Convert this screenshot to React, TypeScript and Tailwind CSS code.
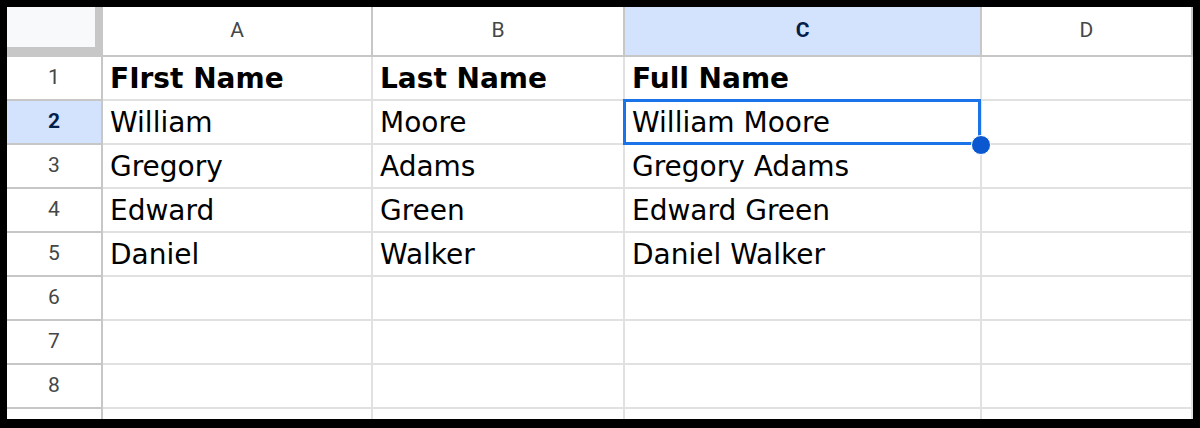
const COLS = ['A', 'B', 'C', 'D'];

const ROWS: string[][] = [
  ['FIrst Name', 'Last Name', 'Full Name', ''],
  ['William', 'Moore', 'William Moore', ''],
  ['Gregory', 'Adams', 'Gregory Adams', ''],
  ['Edward', 'Green', 'Edward Green', ''],
  ['Daniel', 'Walker', 'Daniel Walker', ''],
  ['', '', '', ''],
  ['', '', '', ''],
  ['', '', '', ''],
];

const headFont = "font-['Roboto','Liberation_Sans',Arial,sans-serif]";
const cellFont = "font-['DejaVu_Sans','Verdana',sans-serif]";

export default function App() {
  return (
    <div className="w-[1200px] h-[428px] bg-black pt-[7px] pl-[7px] pr-[7px] pb-[9px]">
      <div className="h-full bg-white overflow-hidden">
        <div className="grid grid-cols-[96px_270px_252px_357px_211px]">
          {/* corner */}
          <div className="h-[50px] bg-[#f8f9fa] border-r-[8px] border-b-[10px] border-[#c7c7c7]" />
          {COLS.map((c) => (
            <div
              key={c}
              className={`h-[50px] flex items-center justify-center border-r-2 border-b-2 border-[#c7c7c7] text-[21px] ${headFont} ${
                c === 'C' ? 'bg-[#d3e3fd] text-[#041e49] font-bold' : 'bg-white text-[#444746]'
              }`}
            >
              <span>{c}</span>
            </div>
          ))}

          {ROWS.map((row, i) => {
            const n = i + 1;
            const active = n === 2;
            return (
              <div key={n} className="contents">
                <div
                  className={`h-[44px] flex items-center justify-center border-r-2 border-b-2 border-[#c7c7c7] text-[21px] ${headFont} ${
                    active ? 'bg-[#d3e3fd] text-[#041e49] font-bold' : 'bg-white text-[#444746]'
                  }`}
                >
                  <span>{n}</span>
                </div>
                {row.map((v, j) => (
                  <div
                    key={j}
                    className={`relative h-[44px] flex items-end pl-[7px] pb-[4px] border-r-2 border-b-2 border-[#e1e1e1] text-[28px] leading-[32px] text-black ${cellFont} ${
                      n === 1 ? 'font-bold' : ''
                    } ${active && j === 2 ? 'z-10' : ''}`}
                  >
                    <span className="whitespace-nowrap">{v}</span>
                    {active && j === 2 && (
                      <>
                        <div className="absolute -left-[2px] -top-[2px] w-[358px] h-[46px] border-[3px] border-[#1a73e8]" />
                        <div className="absolute left-[346px] top-[34px] w-[18px] h-[18px] rounded-full bg-[#0b57d0] border border-white box-content" />
                      </>
                    )}
                  </div>
                ))}
              </div>
            );
          })}

          {/* partially visible row 9 */}
          <div className="h-[10px] border-r-2 border-[#c7c7c7] bg-white" />
          {COLS.map((c) => (
            <div key={c} className="h-[10px] border-r-2 border-[#e1e1e1]" />
          ))}
        </div>
      </div>
    </div>
  );
}
